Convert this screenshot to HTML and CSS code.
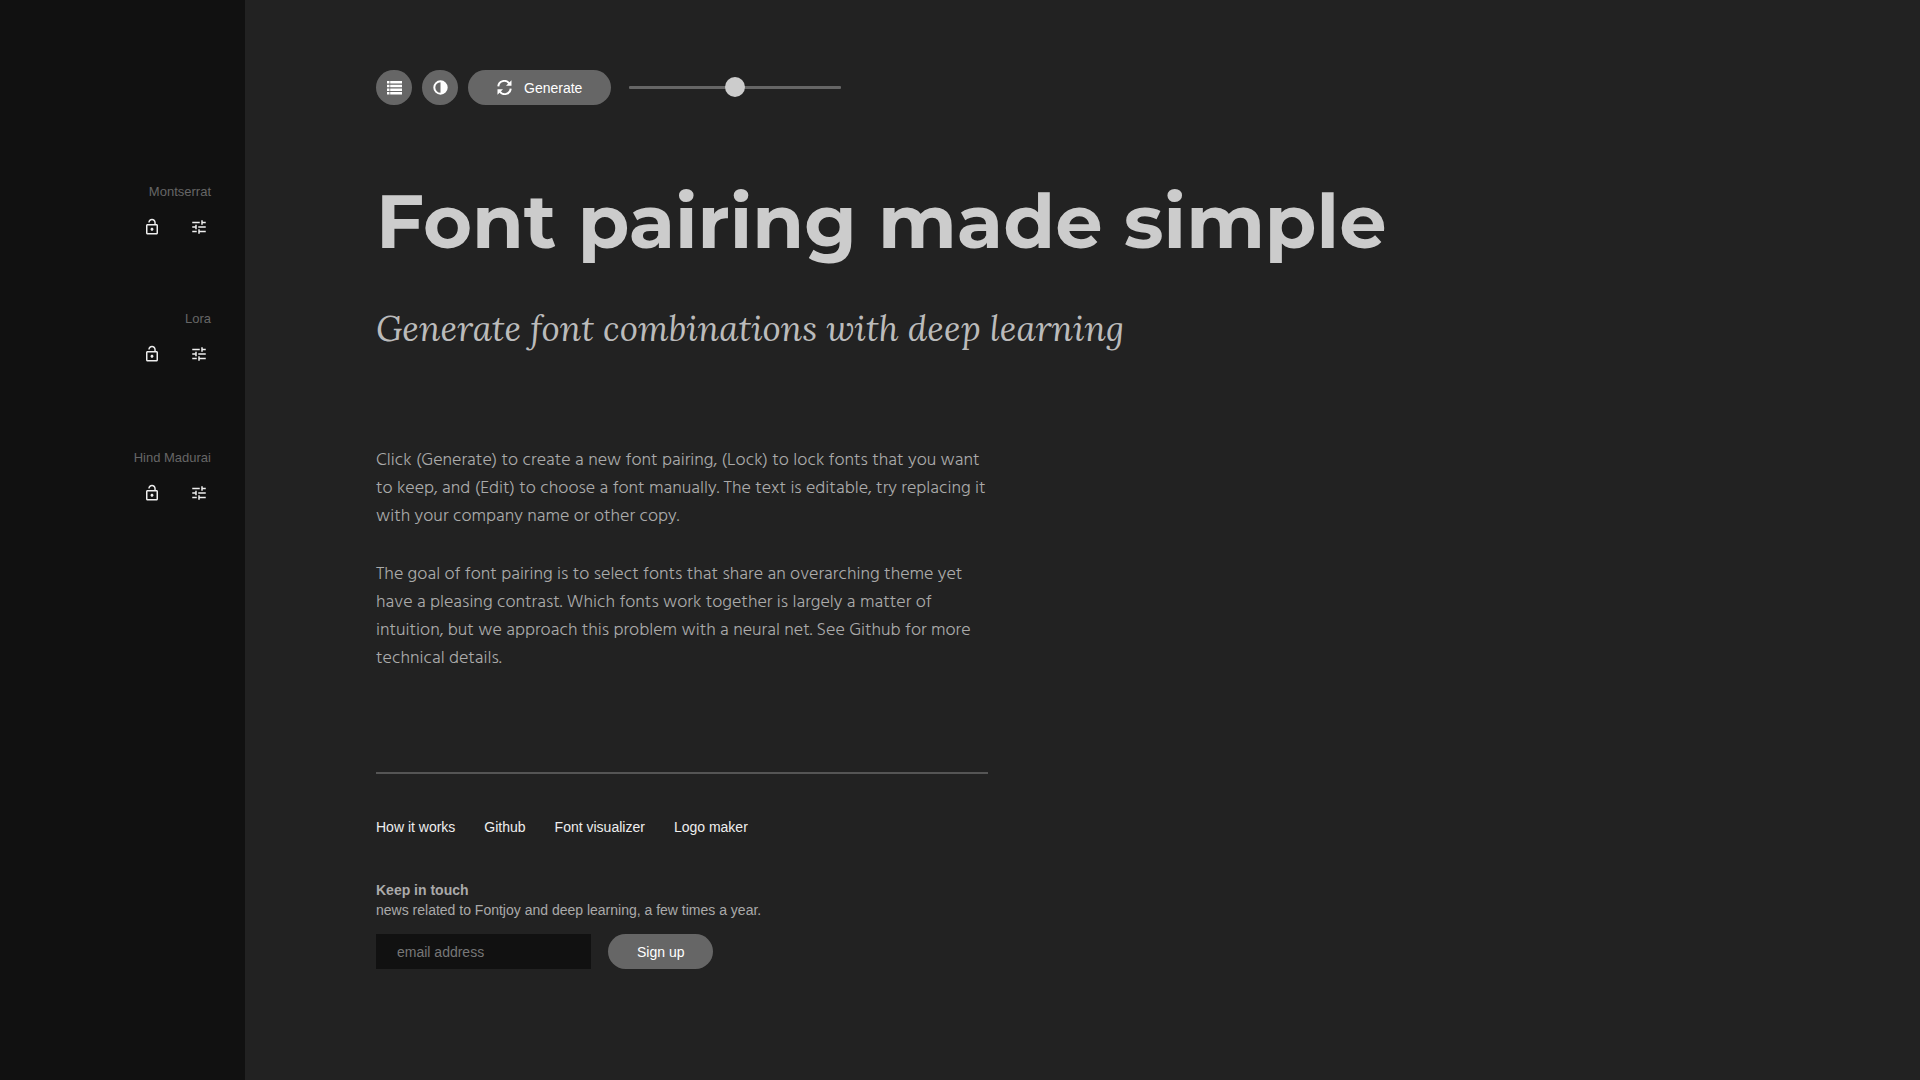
FILE: index.html
```html
<!DOCTYPE html>
<html lang="en">
<head>
    <meta charset="UTF-8">
    <meta name="viewport" content="width=device-width, initial-scale=1.0">
    <title>Fontjoy</title>
    <link rel="stylesheet" href="styles.css">
</head>
<body>
    <svg width="0" height="0" class="sprite" aria-hidden="true">
        <symbol id="lock" viewBox="0 0 24 24">
            <path d="M12 17c1.1 0 2-.9 2-2s-.9-2-2-2-2 .9-2 2 .9 2 2 2zm6-9h-1V6c0-2.76-2.24-5-5-5S7 3.24 7 6h1.9c0-1.71 1.39-3.1 3.1-3.1 1.71 0 3.1 1.39 3.1 3.1v2H6c-1.1 0-2 .9-2 2v10c0 1.1.9 2 2 2h12c1.1 0 2-.9 2-2V10c0-1.1-.9-2-2-2zm0 12H6V10h12v10z"/>
        </symbol>
        <symbol id="tune" viewBox="0 0 24 24">
            <path d="M3 17v2h6v-2H3zM3 5v2h10V5H3zm10 16v-2h8v-2h-8v-2h-2v6h2zM7 9v2H3v2h4v2h2V9H7zm14 4v-2H11v2h10zm-6-4h2V7h4V5h-4V3h-2v6z"/>
        </symbol>
    </svg>

    <div class="page">
        <aside class="sidebar">
            <div class="font-control heading">
                <span class="font-name">Montserrat</span>
                <div class="font-actions">
                    <button type="button" aria-label="Lock"><svg><use href="#lock"/></svg></button>
                    <button type="button" aria-label="Edit"><svg><use href="#tune"/></svg></button>
                </div>
            </div>
            <div class="font-control subheading">
                <span class="font-name">Lora</span>
                <div class="font-actions">
                    <button type="button" aria-label="Lock"><svg><use href="#lock"/></svg></button>
                    <button type="button" aria-label="Edit"><svg><use href="#tune"/></svg></button>
                </div>
            </div>
            <div class="font-control">
                <span class="font-name">Hind Madurai</span>
                <div class="font-actions">
                    <button type="button" aria-label="Lock"><svg><use href="#lock"/></svg></button>
                    <button type="button" aria-label="Edit"><svg><use href="#tune"/></svg></button>
                </div>
            </div>
        </aside>

        <main class="content">
            <div class="toolbar">
                <button type="button" class="btn round" aria-label="List fonts">
                    <svg viewBox="0 0 15 15">
                        <path d="M0 1h2.500v2.500H0zM3.200 1H15v2.500H3.200zM0 4.700h2.500v2.500H0zM3.200 4.700H15v2.500H3.200zM0 8.400h2.500v2.500H0zM3.200 8.400H15v2.500H3.200zM0 12.100h2.500v2.500H0zM3.200 12.100H15v2.500H3.200z"/>
                    </svg>
                </button>
                <button type="button" class="btn round" aria-label="Invert colors">
                    <svg viewBox="0 0 15 15">
                        <path fill-rule="evenodd" d="M7.500 0.300a7.200 7.200 0 1 0 0 14.400a7.200 7.200 0 0 0 0-14.400zM7.500 2.300v10.400a5.200 5.200 0 0 1 0-10.400z"/>
                    </svg>
                </button>
                <button type="button" class="btn generate">
                    <svg viewBox="0 0 15 15">
                        <path class="line" d="M1.300 6.300A6 6 0 0 1 12.200 3.500M13.700 8.700A6 6 0 0 1 2.800 11.500"/>
                        <path d="M14.500 .3v5.500H9zM.5 14.700V9.200H6z"/>
                    </svg>
                    Generate
                </button>
                <input type="range" class="slider" min="0" max="100" value="50" aria-label="Contrast">
            </div>

            <h1 contenteditable="true" spellcheck="false">Font pairing made simple</h1>
            <h2 contenteditable="true" spellcheck="false">Generate font combinations with deep learning</h2>

            <div class="copy" contenteditable="true" spellcheck="false">
                <p>Click (Generate) to create a new font pairing, (Lock) to lock fonts that you want to keep, and (Edit) to choose a font manually. The text is editable, try replacing it with your company name or other copy.</p>
                <p>The goal of font pairing is to select fonts that share an overarching theme yet have a pleasing contrast. Which fonts work together is largely a matter of intuition, but we approach this problem with a neural net. See Github for more technical details.</p>
            </div>

            <footer>
                <nav>
                    <a href="#">How it works</a>
                    <a href="#">Github</a>
                    <a href="#">Font visualizer</a>
                    <a href="#">Logo maker</a>
                </nav>
                <form class="signup">
                    <label for="email"><strong>Keep in touch</strong><br>news related to Fontjoy and deep learning, a few times a year.</label>
                    <div class="fields">
                        <input type="email" id="email" placeholder="email address">
                        <button type="button" class="btn">Sign up</button>
                    </div>
                </form>
            </footer>
        </main>
    </div>
</body>
</html>
```
FILE: styles.css
```css
* {
    box-sizing: border-box;
}
body {
    margin: 0;
    background: #222;
    color: #aaa;
    font-family: Arial, "Liberation Sans", sans-serif;
    font-size: 14px;
    line-height: 20px;
}
button, input {
    font: inherit;
}
.sprite {
    position: absolute;
}
.page {
    display: flex;
    min-height: 100vh;
}

/* sidebar */
.sidebar {
    flex: 0 0 245px;
    padding: 182px 34px 0 0;
    background: #111;
    text-align: right;
}
.font-control.heading {
    height: 127px;
}
.font-control.subheading {
    height: 139px;
}
.font-name {
    display: block;
    color: #666;
    font-size: 13px;
}
.font-actions {
    display: flex;
    justify-content: flex-end;
    gap: 29px;
    margin-top: 16px;
    padding-right: 3px;
}
.font-actions button {
    padding: 0;
    border: 0;
    background: none;
    cursor: pointer;
}
.font-actions svg {
    display: block;
    width: 18px;
    height: 18px;
    fill: #eee;
}

/* toolbar */
.content {
    flex: 1;
    padding: 70px 40px 40px 131px;
}
.toolbar {
    display: flex;
    align-items: center;
    gap: 10px;
}
.btn {
    display: flex;
    align-items: center;
    justify-content: center;
    height: 35px;
    padding: 0 29px;
    border: 0;
    border-radius: 18px;
    background: #666;
    color: #fff;
    cursor: pointer;
}
.btn svg {
    width: 15px;
    height: 15px;
    fill: #fff;
}
.btn .line {
    fill: none;
    stroke: #fff;
    stroke-width: 2;
}
.btn.round {
    width: 36px;
    padding: 0;
}
.btn.generate {
    gap: 12px;
}
.slider {
    width: 212px;
    height: 20px;
    margin: 0 0 0 8px;
    background: none;
    appearance: none;
}
.slider::-webkit-slider-runnable-track {
    height: 3px;
    background: #666;
    border-radius: 1px;
}
.slider::-webkit-slider-thumb {
    width: 20px;
    height: 20px;
    margin-top: -9px;
    border-radius: 50%;
    background: #ccc;
    appearance: none;
}

/* editable text */
h1 {
    margin: 69px 0 0;
    color: #ccc;
    font: 700 75px/94px Montserrat, Inter, sans-serif;
}
h2 {
    margin: 36px 0 0;
    color: #bbb;
    font: italic 400 35px/50px Lora, "Liberation Serif", serif;
}
.copy {
    max-width: 612px;
    margin-top: 92px;
    font: 300 18px/28px "Hind Madurai", "Open Sans", sans-serif;
}
.copy p {
    margin: 0 0 30px;
}

/* footer */
footer {
    max-width: 612px;
    margin-top: 100px;
    border-top: 2px solid #555;
}
nav {
    display: flex;
    gap: 29px;
    margin-top: 43px;
}
nav a {
    color: #eee;
    text-decoration: none;
}
.signup {
    margin-top: 43px;
}
.fields {
    display: flex;
    gap: 17px;
    margin-top: 14px;
}
.fields input {
    width: 215px;
    height: 35px;
    padding: 0 21px;
    border: 0;
    background: #111;
    color: #aaa;
}
.fields input::placeholder {
    color: #777;
}
```
